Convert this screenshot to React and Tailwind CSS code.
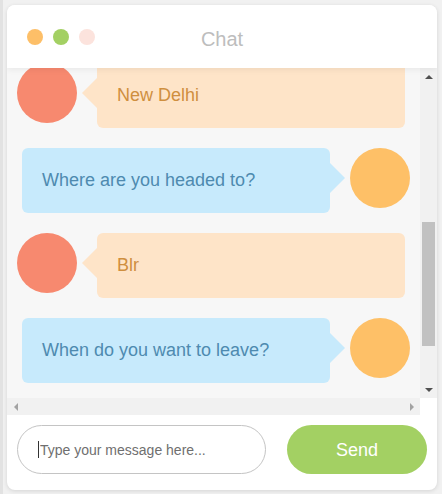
import React from "react";

const messages = [
  { side: "left", text: "New Delhi" },
  { side: "right", text: "Where are you headed to?" },
  { side: "left", text: "Blr" },
  { side: "right", text: "When do you want to leave?" },
];

function LeftRow({ text }) {
  return (
    <div className="flex items-start pl-[10px] pr-[15px]">
      <div className="w-[60px] h-[60px] rounded-full bg-[#f7896f] shrink-0" />
      <div className="relative ml-[20px] w-[308px] h-[65px] rounded-[6px] bg-[#fee4c8] flex items-center pl-[20px] text-[18px] text-[#cf8f3f]">
        <div className="absolute left-[-15px] top-[15px] w-0 h-0 border-y-[15px] border-y-transparent border-r-[15px] border-r-[#fee4c8]" />
        {text}
      </div>
    </div>
  );
}

function RightRow({ text }) {
  return (
    <div className="flex items-start pl-[15px] pr-[10px]">
      <div className="relative mr-[20px] w-[308px] h-[65px] rounded-[6px] bg-[#c7eafc] flex items-center pl-[20px] text-[18px] text-[#4e8ab0]">
        <div className="absolute right-[-15px] top-[15px] w-0 h-0 border-y-[15px] border-y-transparent border-l-[15px] border-l-[#c7eafc]" />
        {text}
      </div>
      <div className="w-[60px] h-[60px] rounded-full bg-[#fec067] shrink-0" />
    </div>
  );
}

export default function App() {
  return (
    <div
      className="w-[442px] h-[494px] bg-[#f1f1f1] border-l-[3px] border-[#e2e2e2] pl-[4px] pt-[5px]"
      style={{ fontFamily: '"Liberation Sans", Arial, sans-serif' }}
    >
      <div className="w-[430px] h-[485px] bg-white rounded-[8px] shadow-[0_1px_4px_rgba(0,0,0,0.12)] flex flex-col overflow-hidden">
        {/* header */}
        <div className="relative z-10 h-[63px] shrink-0 flex items-center bg-white shadow-[0_2px_6px_rgba(0,0,0,0.06)]">
          <div className="flex gap-[10px] pl-[20px]">
            <div className="w-[16px] h-[16px] rounded-full bg-[#fdbf68]" />
            <div className="w-[16px] h-[16px] rounded-full bg-[#a3d063]" />
            <div className="w-[16px] h-[16px] rounded-full bg-[#fce3dd]" />
          </div>
          <div className="absolute inset-x-0 top-[22px] text-center text-[20px] text-[#bdbdbd] leading-[24px]">
            Chat
          </div>
        </div>

        {/* messages with scrollbars */}
        <div className="h-[347px] shrink-0 flex flex-col">
          <div className="flex h-[330px]">
            <div className="w-[413px] overflow-hidden bg-[#f7f7f7]">
              <div className="flex flex-col gap-[20px] mt-[-5px]">
                {messages.map((m, i) =>
                  m.side === "left" ? (
                    <LeftRow key={i} text={m.text} />
                  ) : (
                    <RightRow key={i} text={m.text} />
                  )
                )}
              </div>
            </div>
            <div className="w-[17px] flex flex-col bg-[#f1f1f1]">
              <div className="h-[17px] flex items-center justify-center">
                <div className="w-0 h-0 border-x-[4px] border-x-transparent border-b-[4px] border-b-[#505050]" />
              </div>
              <div className="flex-1 pt-[137px] px-[2px]">
                <div className="h-[124px] bg-[#c1c1c1]" />
              </div>
              <div className="h-[17px] flex items-center justify-center">
                <div className="w-0 h-0 border-x-[4px] border-x-transparent border-t-[4px] border-t-[#505050]" />
              </div>
            </div>
          </div>
          <div className="flex h-[17px]">
            <div className="w-[413px] bg-[#f1f1f1] flex items-center justify-between">
              <div className="w-[17px] flex justify-center">
                <div className="w-0 h-0 border-y-[4px] border-y-transparent border-r-[4px] border-r-[#a3a3a3]" />
              </div>
              <div className="w-[17px] flex justify-center">
                <div className="w-0 h-0 border-y-[4px] border-y-transparent border-l-[4px] border-l-[#a3a3a3]" />
              </div>
            </div>
            <div className="w-[17px] bg-white" />
          </div>
        </div>

        {/* footer */}
        <div className="flex-1 flex items-start pt-[10px] px-[10px] justify-between">
          <div className="relative">
            <input
              type="text"
              placeholder="Type your message here..."
              className="w-[249px] h-[49px] rounded-full border border-[#c4c4c4] pl-[22px] text-[14px] text-[#555] placeholder:text-[#6f6f6f] outline-none bg-white"
            />
            <span className="absolute left-[21px] top-[16px] w-px h-[17px] bg-[#333]" />
          </div>
          <button className="w-[140px] h-[49px] rounded-full bg-[#a3d063] text-white text-[18px] pt-[2px]">
            Send
          </button>
        </div>
      </div>
    </div>
  );
}
